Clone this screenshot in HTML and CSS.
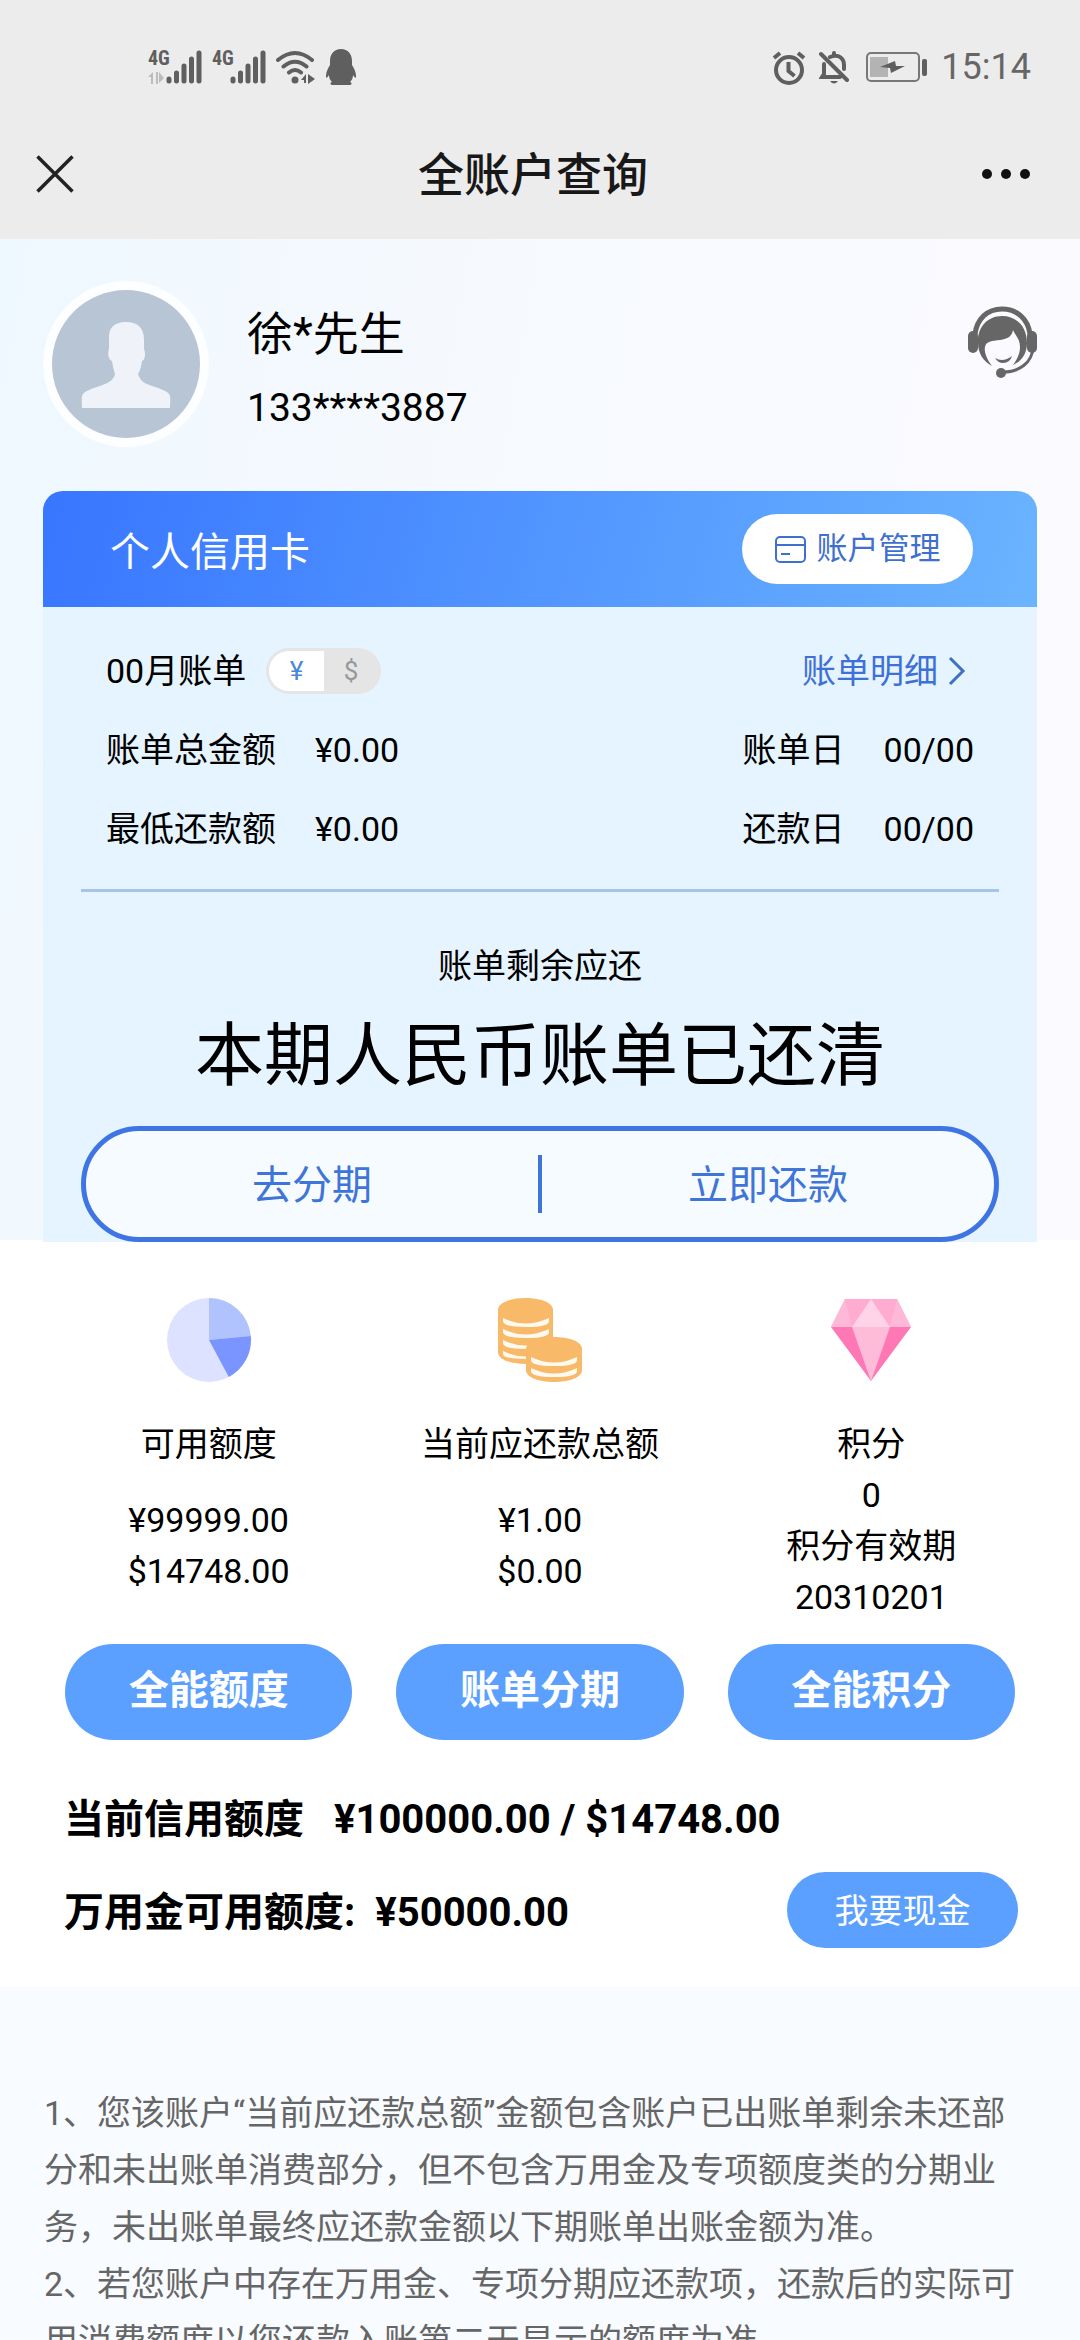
FILE: index.html
```html
<!DOCTYPE html>
<html lang="zh-CN">
<head>
<meta charset="utf-8">
<meta name="viewport" content="width=device-width">
<title>全账户查询</title>
<link rel="stylesheet" href="styles.css">
</head>
<body>
<div class="app">
  <header class="topbar">
    <div class="status">
      <div class="status-group status-left">
        <div class="signal">
          <span class="signal-type">4G</span>
          <svg class="icon" width="54" height="35" viewBox="0 0 54 35"><g stroke="#5f5f5f" stroke-width="5" stroke-linecap="round"><path d="M21 29v2M28.500 23v8M36 16v15M43.500 9v22M51 3v28"/></g><path d="M0 27l5-5v12H3v-7zM11 22l5 6-5 5zM8 22h2v12H8z" fill="#bcbcbc"/></svg>
        </div>
        <div class="signal">
          <span class="signal-type">4G</span>
          <svg class="icon" width="54" height="35" viewBox="0 0 54 35"><g stroke="#5f5f5f" stroke-width="5" stroke-linecap="round"><path d="M21 29v2M28.500 23v8M36 16v15M43.500 9v22M51 3v28"/></g></svg>
        </div>
        <svg class="icon" width="40" height="35" viewBox="0 0 40 35"><g fill="none" stroke="#5f5f5f" stroke-width="4" stroke-linecap="round"><path d="M2 10Q19-4 36 10M7.500 16.500Q19 7 30.500 16.500M13 22.500Q19 17.500 25 22.500"/></g><circle cx="19" cy="30" r="3.500" fill="#5f5f5f"/><path d="M25 30l5-6v9h-2v-3zM32 24l7 5-7 5z" fill="#5f5f5f"/></svg>
        <svg class="icon" width="30" height="36" viewBox="0 0 30 36"><path d="M15 0C8 0 4 5 4 12v4C2 19 0 23 0 27c0 3 1 2 3-1 0 3 1 5 3 7-2 0-2 3 0 3h18c2 0 2-3 0-3 2-2 3-4 3-7 2 3 3 4 3 1 0-4-2-8-4-11v-4C26 5 22 0 15 0z" fill="#5f5f5f"/></svg>
      </div>
      <div class="status-group status-right">
        <svg class="icon" width="34" height="35" viewBox="0 0 34 35"><g fill="none" stroke="#5f5f5f" stroke-width="4"><circle cx="17" cy="20" r="13"/><path d="M16.500 12v9l6 5M2 8l6-5M26 3l6 5"/></g></svg>
        <svg class="icon" width="30" height="35" viewBox="0 0 30 35"><g fill="none" stroke="#5f5f5f" stroke-width="4" stroke-linecap="round"><path d="M2 4l26 26M5 14v10l-2 3h18M11 7c9-4 14 2 14 8v4M15 5V3"/></g><path d="M11 31h8q-4 5-8 0z" fill="#5f5f5f"/></svg>
        <svg class="icon battery" width="62" height="30" viewBox="0 0 62 30"><rect x="1" y="1" width="52" height="28" rx="4" fill="none" stroke="#777" stroke-width="2"/><rect x="4" y="5" width="18" height="20" fill="#b3b3b3"/><path d="M14 15l15-6 1 5h9l-14 7-1-5z" fill="#5f5f5f"/><rect x="56" y="7" width="5" height="17" rx="2" fill="#5f5f5f"/></svg>
        <time class="clock">15:14</time>
      </div>
    </div>
    <nav class="nav">
      <button class="nav-button" aria-label="关闭"><svg class="icon" width="38" height="38" viewBox="0 0 38 38"><path d="M1.500 1.500l35 35M36.500 1.500l-35 35" stroke="#222" stroke-width="3.500"/></svg></button>
      <h1 class="nav-title">全账户查询</h1>
      <button class="nav-button nav-more" aria-label="更多"><svg class="icon" width="48" height="38" viewBox="0 0 48 38"><g fill="#111"><circle cx="5" cy="19" r="5"/><circle cx="24" cy="19" r="5"/><circle cx="43" cy="19" r="5"/></g></svg></button>
    </nav>
  </header>

  <main class="content">
    <section class="hero">
      <div class="profile">
        <svg class="icon avatar" width="166" height="166" viewBox="0 0 166 166"><circle cx="83" cy="83" r="83" fill="#fff" opacity=".85"/><circle cx="83" cy="83" r="74" fill="#b8c5d4"/><path d="M83 41c-12 0-18 6-17 18v9c-2 5 0 11 3 12 1 6 2 10 3 13-1 5-5 8-10 10-10 4-19 6-22 10-2 2-1 8-1 14h88c0-6 1-12-1-14-3-4-12-6-22-10-5-2-7-5-9-10 2-3 3-7 4-13 3-1 4-7 2-12v-9c0-12-6-18-18-18z" fill="#eff3f9"/></svg>
        <div class="profile-text">
          <p class="profile-name">徐*先生</p>
          <p class="profile-phone">133****3887</p>
        </div>
        <button class="service" aria-label="客服"><svg class="icon" width="69" height="72" viewBox="0 0 69 72"><g fill="none" stroke="#666"><path d="M7 28C9 13 19 3 34 3s26 10 28 25" stroke-width="5"/><path d="M65 42c-1 14-13 24-30 24" stroke-width="3"/></g><rect x="0" y="25" width="10" height="22" rx="5" fill="#666"/><rect x="59" y="25" width="10" height="22" rx="5" fill="#666"/><circle cx="33" cy="67" r="5" fill="#666"/><path d="M34 10C19 10 9 22 10 37c0 10 5 18 14 23-6-8-8-15-7-19 1-6 7-6 15-7 8-1 12-4 13-10 2 5 7 9 7 17 0 7-3 12-7 18 9-4 14-12 14-22C59 21 49 10 34 10z" fill="#666"/><path d="M27 52q8 5 17-2-2 7-9 7-5 0-8-5z" fill="#666"/></svg></button>
      </div>

      <article class="card">
        <header class="card-head">
          <h2 class="card-title">个人信用卡</h2>
          <button class="manage"><svg class="icon" width="31" height="27" viewBox="0 0 31 27"><g fill="none" stroke="#3f70d0" stroke-width="2"><rect x="1" y="1" width="29" height="25" rx="4"/><path d="M1 9h29M6 18h9"/></g></svg><span class="manage-label">账户管理</span></button>
        </header>
        <div class="card-body">
          <div class="bill-rows">
            <div class="bill-row">
              <div class="bill-month">
                <span>00月账单</span>
                <div class="currency">
                  <label class="currency-option"><input type="radio" name="currency" checked><span>¥</span></label>
                  <label class="currency-option"><input type="radio" name="currency"><span>$</span></label>
                </div>
              </div>
              <a class="detail" href="#detail">账单明细<svg class="icon" width="18" height="30" viewBox="0 0 18 30"><path d="M2 2l13 13L2 28" fill="none" stroke="#3f70c8" stroke-width="3"/></svg></a>
            </div>
            <div class="bill-row">
              <dl class="pair"><dt>账单总金额</dt><dd>¥0.00</dd></dl>
              <dl class="pair"><dt>账单日</dt><dd>00/00</dd></dl>
            </div>
            <div class="bill-row">
              <dl class="pair"><dt>最低还款额</dt><dd>¥0.00</dd></dl>
              <dl class="pair"><dt>还款日</dt><dd>00/00</dd></dl>
            </div>
          </div>
          <hr class="rule">
          <p class="due-label">账单剩余应还</p>
          <p class="due-value">本期人民币账单已还清</p>
          <div class="actions">
            <button class="action">去分期</button>
            <span class="action-rule"></span>
            <button class="action">立即还款</button>
          </div>
        </div>
      </article>
    </section>

    <section class="summary">
      <div class="metrics">
        <div class="metric">
          <svg class="icon" width="84" height="84" viewBox="0 0 84 84"><circle cx="42" cy="42" r="42" fill="#dce2ff"/><path d="M42 42V0a42 42 0 0 1 41.800 38z" fill="#b0c3ff"/><path d="M42 42l41.800-4a42 42 0 0 1-22 41z" fill="#7a95ff"/></svg>
          <h3 class="metric-line">可用额度</h3>
          <div class="metric-values"><p>¥99999.00</p><p>$14748.00</p></div>
          <button class="metric-button">全能额度</button>
        </div>
        <div class="metric">
          <svg class="icon" width="84" height="84" viewBox="0 0 84 84"><path d="M0 12C0-4 55-4 55 12v42C55 70 0 70 0 54z" fill="#f8b968"/><path d="M5 20q22 11 46 0v3q0 6-23 6T5 23zM5 31q22 11 46 0v3q0 6-23 6T5 34zM5 42q22 11 46 0v3q0 6-23 6T5 45zM5 53q22 11 46 0v3q0 5-23 5T5 56z" fill="#fffaf0"/><path d="M28 51c0-16 56-16 56 0v21c0 16-56 16-56 0z" fill="#f8b968"/><path d="M33 59q23 11 46 0v3q0 6-23 6t-23-6zM33 70q23 11 46 0v3q0 6-23 6t-23-6z" fill="#fffaf0"/></svg>
          <h3 class="metric-line">当前应还款总额</h3>
          <div class="metric-values"><p>¥1.00</p><p>$0.00</p></div>
          <button class="metric-button">账单分期</button>
        </div>
        <div class="metric">
          <svg class="icon" width="84" height="84" viewBox="0 0 84 84"><path d="M16 1h52l14 28H2z" fill="#ffacd0"/><path d="M16 1l7 28H2zM68 1l-7 28h21z" fill="#ffb9d8"/><path d="M42 1l19 28H23z" fill="#ffd4e8"/><path d="M2 29h80L42 83z" fill="#ff78b5"/><path d="M23 29h38L42 83z" fill="#ffbcd9"/></svg>
          <h3 class="metric-line">积分</h3>
          <p class="metric-line">0</p>
          <p class="metric-line">积分有效期</p>
          <p class="metric-line">20310201</p>
          <button class="metric-button">全能积分</button>
        </div>
      </div>
      <div class="limits">
        <dl class="limit"><dt>当前信用额度</dt><dd>¥100000.00 / $14748.00</dd></dl>
        <div class="limit-row">
          <dl class="limit limit-cash"><dt>万用金可用额度:</dt><dd>¥50000.00</dd></dl>
          <button class="cash">我要现金</button>
        </div>
      </div>
    </section>

    <section class="notes">
      <p>1、您该账户“当前应还款总额”金额包含账户已出账单剩余未还部分和未出账单消费部分，但不包含万用金及专项额度类的分期业务，未出账单最终应还款金额以下期账单出账金额为准。</p>
      <p>2、若您账户中存在万用金、专项分期应还款项，还款后的实际可用消费额度以您还款入账第二天显示的额度为准</p>
    </section>
  </main>
</div>
</body>
</html>
```
FILE: styles.css
```css
* { box-sizing: border-box; margin: 0; padding: 0; }

body {
  font-family: Roboto, "Noto Sans CJK SC", sans-serif;
  font-size: 34px;
  color: #000;
  background: #f8fbff;
}

button {
  font: inherit;
  color: inherit;
  background: none;
  border: 0;
}

.icon { display: block; flex: none; }

.app {
  display: flex;
  flex-direction: column;
  height: 100vh;
  overflow: hidden;
}

.topbar { flex: none; background: #ececec; }

.status {
  display: flex;
  justify-content: space-between;
  height: 109px;
  padding: 25px 49px 0 148px;
}
.status-group { display: flex; align-items: center; }
.status-left { gap: 10px; }
.status-right { gap: 13px; }
.signal { position: relative; }
.signal-type {
  position: absolute;
  top: -2px;
  left: 0;
  font: bold 20px/20px "Roboto Condensed", "Liberation Sans Narrow", sans-serif;
  color: #5f5f5f;
}
.battery { margin-left: 4px; }
.clock { font-size: 36px; color: #666; }

.nav {
  display: grid;
  grid-template-columns: 1fr auto 1fr;
  align-items: center;
  height: 130px;
  padding: 0 50px 0 36px;
}
.nav-button { justify-self: start; }
.nav-more { justify-self: end; }
.nav-title {
  padding-top: 2px;
  font-size: 46px;
  font-weight: 500;
  line-height: 60px;
  color: #181818;
}

.content { flex: 1; min-height: 0; overflow: hidden; }

.hero { background: linear-gradient(100deg, #eef8ff, #f5f9fe 35%, #f9faff 65%, #fbfaff); }

.profile {
  display: flex;
  gap: 38px;
  padding: 42px 43px 44px;
}
.profile-text {
  display: flex;
  flex: 1;
  flex-direction: column;
  gap: 11px;
  padding-top: 20px;
}
.profile-name { font-size: 46px; line-height: 66px; }
.profile-phone { font-size: 39px; line-height: 60px; }
.service { align-self: flex-start; padding-top: 25px; }

.card { position: relative; margin: 0 43px; }
.card-head {
  display: flex;
  align-items: center;
  justify-content: space-between;
  height: 116px;
  padding: 0 64px 0 67px;
  border-radius: 20px 20px 0 0;
  background: linear-gradient(105deg, #3876ff, #6ab4ff);
}
.card-title {
  padding-top: 8px;
  font-size: 40px;
  font-weight: 400;
  line-height: 60px;
  color: #fff;
}
.manage {
  display: flex;
  align-items: center;
  justify-content: center;
  gap: 11px;
  width: 231px;
  height: 70px;
  border-radius: 35px;
  background: #fff;
  font-size: 31px;
  color: #3f70d0;
}
.manage-label { line-height: 50px; }

.card-body {
  padding: 24px 38px 0;
  background: #e5f4fe;
}
.bill-rows { padding: 0 25px; }
.bill-row {
  display: flex;
  align-items: center;
  justify-content: space-between;
  height: 79px;
  line-height: 50px;
}
.bill-month { display: flex; align-items: center; gap: 20px; }
.currency {
  display: flex;
  width: 115px;
  height: 46px;
  padding: 3px;
  border-radius: 23px;
  background: #e5e5e5;
  overflow: hidden;
}
.currency-option { flex: 1; font-size: 26px; line-height: 40px; text-align: center; color: #999; }
.currency-option input { position: absolute; opacity: 0; }
.currency-option span { display: block; }
.currency-option input:checked + span {
  border-radius: 20px 0 0 20px;
  background: #fff;
  color: #4a88d8;
}
.detail {
  display: flex;
  align-items: center;
  gap: 10px;
  padding-right: 8px;
  color: #3f70d8;
  text-decoration: none;
}
.pair { display: flex; align-items: baseline; gap: 39px; }

.rule { height: 3px; margin-top: 21px; border: 0; background: #a5c6e8; }
.due-label { margin-top: 49px; line-height: 50px; text-align: center; }
.due-value { margin-top: 16px; font-size: 69px; line-height: 100px; text-align: center; }

.actions {
  display: flex;
  align-items: center;
  height: 116px;
  margin: 19px 0 -2px;
  border: 5px solid #3f74e4;
  border-radius: 58px;
  background: #f6fbff;
}
.action { flex: 1; padding-top: 3px; font-size: 40px; line-height: 60px; color: #3f74d8; }
.action-rule { width: 4px; height: 58px; background: #3f74d8; }

.summary { padding: 58px 0 39px; background: #fff; }
.metrics {
  display: grid;
  grid-template-columns: repeat(3, 1fr);
  padding: 0 43px;
}
.metric {
  display: flex;
  flex-direction: column;
  align-items: center;
  padding: 0 22px;
  line-height: 51px;
  text-align: center;
}
.metric-line { font-size: 34px; font-weight: 400; white-space: nowrap; }
h3.metric-line { margin-top: 37px; }
.metric-values { margin: 25px 0 20px; }
.metric-button {
  width: 100%;
  height: 96px;
  margin-top: auto;
  padding-bottom: 4px;
  border-radius: 48px;
  background: #5b9fff;
  font-size: 40px;
  font-weight: 700;
  color: #fff;
}
.metric-line + .metric-button { margin-top: 21px; }

.limits { padding: 50px 62px 0 64px; }
.limit {
  display: flex;
  gap: 30px;
  font-size: 40px;
  font-weight: 700;
  line-height: 60px;
}
.limit-cash { gap: 20px; padding-top: 5px; }
.limit-row {
  display: flex;
  align-items: center;
  justify-content: space-between;
  margin-top: 22px;
}
.cash {
  width: 231px;
  height: 76px;
  padding-bottom: 4px;
  border-radius: 38px;
  background: #5b9fff;
  color: #fff;
}

.notes {
  padding: 98px 56px 43px 44px;
  line-height: 57px;
  color: #666;
}
```
